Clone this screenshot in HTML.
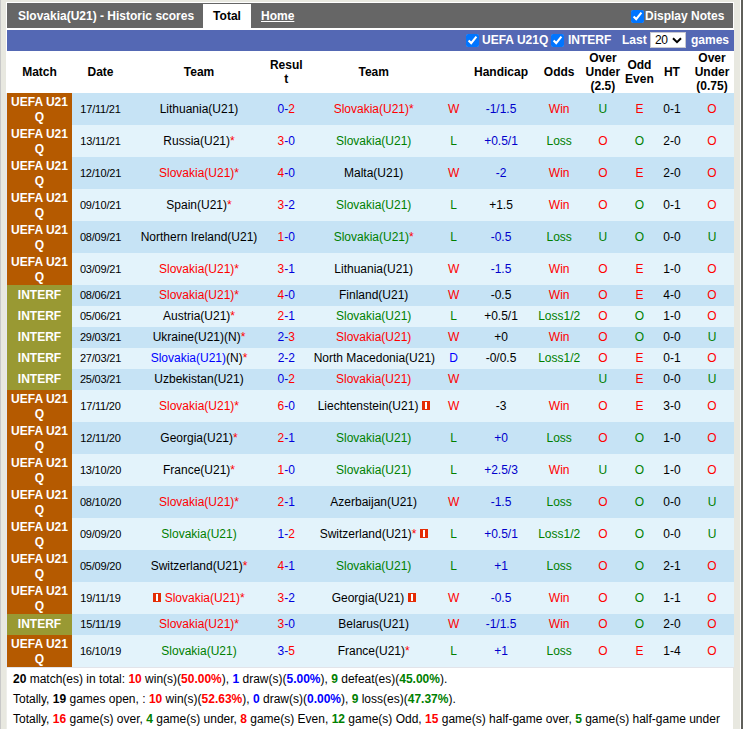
<!DOCTYPE html>
<html><head><meta charset="utf-8"><style>
html,body{margin:0;padding:0}
body{width:743px;height:729px;overflow:hidden;background:#e8e8e0;position:relative;font-family:"Liberation Sans",sans-serif;font-size:12px;color:#000}
.abs{position:absolute}
r{color:#ff0000} g{color:#008000} bl{color:#0000cc} bb{color:#0000ff} rs{color:#0000dd} k{color:#000}
.row{position:absolute;left:7px;width:727px}
.row.d{background:#c6e3f5} .row.l{background:#e3f3fb}
.c{position:absolute;top:0;width:120px;text-align:center;white-space:nowrap;height:100%}
.mc{position:absolute;left:0;top:0;width:65px;height:100%;color:#fff;font-weight:bold;display:flex;align-items:center;justify-content:center;text-align:center;line-height:15px}
.mc.u span{position:relative;top:1px}
.mc.u{background:#b55a00} .mc.i{background:#999933}
.hrow{position:absolute;left:7px;top:51px;width:727px;height:42px;background:#fff;color:#000;font-weight:bold}
.hrow .c{display:flex;align-items:center;justify-content:center;line-height:14px}
.rc{display:inline-block;width:8px;height:9px;background:#e42c05;position:relative;vertical-align:0px}
.rc:after{content:"";position:absolute;left:3px;top:1px;width:2px;height:7px;background:#fff}
.cb{position:absolute;margin:0;width:13px;height:13px;accent-color:#0075ff}
.dt{font-size:11px;letter-spacing:-0.2px}
.foot{position:absolute;left:13px;color:#000;white-space:nowrap}
.foot b{font-weight:bold}
</style></head><body>
<div class="abs" style="left:0;top:0;width:1px;height:729px;background:#c8c8c8"></div>
<div class="abs" style="left:740px;top:0;width:1px;height:729px;background:#fff"></div>
<div class="abs" style="left:741px;top:0;width:2px;height:729px;background:#5f5f5a"></div>
<div class="abs" style="left:6px;top:2px;width:728px;height:666px;background:#fff"></div>
<div class="abs" style="left:6px;top:93px;width:1px;height:575px;background:#e6e8f0"></div>
<div class="abs" style="left:6px;top:668px;width:1px;height:61px;background:#eeeeea"></div>
<div class="abs" style="left:7px;top:668px;width:726px;height:61px;background:#fff"></div>
<div class="abs" style="left:7px;top:3px;width:726px;height:25px;background:#666"></div>
<div class="abs" style="left:18px;top:4px;height:25px;line-height:25px;color:#fff;font-weight:bold">Slovakia(U21) - Historic scores</div>
<div class="abs" style="left:203px;top:4px;width:48px;height:24px;background:#fff;line-height:25px;text-align:center;font-weight:bold;color:#000">Total</div>
<div class="abs" style="left:261px;top:4px;height:25px;line-height:25px;color:#fff;font-weight:bold;text-decoration:underline">Home</div>
<div class="abs" style="left:7px;top:30px;width:727px;height:21px;background:#5468b4"></div>
<input type="checkbox" checked class="cb" style="left:631px;top:10px">
<div class="abs" style="left:645px;top:4px;height:25px;line-height:25px;color:#fff;font-weight:bold">Display Notes</div>
<input type="checkbox" checked class="cb" style="left:466px;top:34px">
<div class="abs" style="left:482px;top:30px;height:21px;line-height:21px;color:#fff;font-weight:bold">UEFA U21Q</div>
<input type="checkbox" checked class="cb" style="left:551px;top:34px">
<div class="abs" style="left:568px;top:30px;height:21px;line-height:21px;color:#fff;font-weight:bold">INTERF</div>
<div class="abs" style="left:622px;top:30px;height:21px;line-height:21px;color:#fff;font-weight:bold">Last</div>
<div class="abs" style="left:650px;top:32px;width:34px;height:14px;border:1px solid #c8c8d0;background:#fff;line-height:14px;color:#000"><span style="position:absolute;left:4px;top:0;letter-spacing:-0.3px">20</span><svg style="position:absolute;left:21px;top:4px" width="10" height="7" viewBox="0 0 10 7"><path d="M1 1.2 L5 5.2 L9 1.2" stroke="#000" stroke-width="2" fill="none"/></svg></div>
<div class="abs" style="left:691px;top:30px;height:21px;line-height:21px;color:#fff;font-weight:bold">games</div>

<div class="hrow"><div class="c h" style="left:-27.5px">Match</div><div class="c h" style="left:33.5px">Date</div><div class="c h" style="left:132.0px">Team</div><div class="c h" style="left:219.3px">Resul<br>t</div><div class="c h" style="left:306.7px">Team</div><div class="c h" style="left:434.0px">Handicap</div><div class="c h" style="left:492.2px">Odds</div><div class="c h" style="left:535.9px">Over<br>Under<br>(2.5)</div><div class="c h" style="left:572.4px">Odd<br>Even</div><div class="c h" style="left:604.9px">HT</div><div class="c h" style="left:645.0px">Over<br>Under<br>(0.75)</div></div>
<div class="row d" style="top:93px;height:32px;line-height:32px"><div class="mc u"><span>UEFA U21<br>Q</span></div><div class="c dt" style="left:33.5px">17/11/21</div><div class="c " style="left:132.0px">Lithuania(U21)</div><div class="c " style="left:219.3px"><rs>0-</rs><r>2</r></div><div class="c " style="left:306.7px"><r>Slovakia(U21)*</r></div><div class="c " style="left:386.6px"><r>W</r></div><div class="c " style="left:434.0px"><bl>-1/1.5</bl></div><div class="c " style="left:492.2px"><r>Win</r></div><div class="c " style="left:535.9px"><g>U</g></div><div class="c " style="left:572.4px"><r>E</r></div><div class="c " style="left:604.9px">0-1</div><div class="c " style="left:645.0px"><r>O</r></div></div>
<div class="row l" style="top:125px;height:32px;line-height:32px"><div class="mc u"><span>UEFA U21<br>Q</span></div><div class="c dt" style="left:33.5px">13/11/21</div><div class="c " style="left:132.0px">Russia(U21)<r>*</r></div><div class="c " style="left:219.3px"><r>3</r><rs>-0</rs></div><div class="c " style="left:306.7px"><g>Slovakia(U21)</g></div><div class="c " style="left:386.6px"><g>L</g></div><div class="c " style="left:434.0px"><bl>+0.5/1</bl></div><div class="c " style="left:492.2px"><g>Loss</g></div><div class="c " style="left:535.9px"><r>O</r></div><div class="c " style="left:572.4px"><g>O</g></div><div class="c " style="left:604.9px">2-0</div><div class="c " style="left:645.0px"><r>O</r></div></div>
<div class="row d" style="top:157px;height:32px;line-height:32px"><div class="mc u"><span>UEFA U21<br>Q</span></div><div class="c dt" style="left:33.5px">12/10/21</div><div class="c " style="left:132.0px"><r>Slovakia(U21)*</r></div><div class="c " style="left:219.3px"><r>4</r><rs>-0</rs></div><div class="c " style="left:306.7px">Malta(U21)</div><div class="c " style="left:386.6px"><r>W</r></div><div class="c " style="left:434.0px"><bl>-2</bl></div><div class="c " style="left:492.2px"><r>Win</r></div><div class="c " style="left:535.9px"><r>O</r></div><div class="c " style="left:572.4px"><r>E</r></div><div class="c " style="left:604.9px">2-0</div><div class="c " style="left:645.0px"><r>O</r></div></div>
<div class="row l" style="top:189px;height:32px;line-height:32px"><div class="mc u"><span>UEFA U21<br>Q</span></div><div class="c dt" style="left:33.5px">09/10/21</div><div class="c " style="left:132.0px">Spain(U21)<r>*</r></div><div class="c " style="left:219.3px"><r>3</r><rs>-2</rs></div><div class="c " style="left:306.7px"><g>Slovakia(U21)</g></div><div class="c " style="left:386.6px"><g>L</g></div><div class="c " style="left:434.0px"><k>+1.5</k></div><div class="c " style="left:492.2px"><r>Win</r></div><div class="c " style="left:535.9px"><r>O</r></div><div class="c " style="left:572.4px"><g>O</g></div><div class="c " style="left:604.9px">0-1</div><div class="c " style="left:645.0px"><r>O</r></div></div>
<div class="row d" style="top:221px;height:32px;line-height:32px"><div class="mc u"><span>UEFA U21<br>Q</span></div><div class="c dt" style="left:33.5px">08/09/21</div><div class="c " style="left:132.0px">Northern Ireland(U21)</div><div class="c " style="left:219.3px"><r>1</r><rs>-0</rs></div><div class="c " style="left:306.7px"><g>Slovakia(U21)</g><r>*</r></div><div class="c " style="left:386.6px"><g>L</g></div><div class="c " style="left:434.0px"><bl>-0.5</bl></div><div class="c " style="left:492.2px"><g>Loss</g></div><div class="c " style="left:535.9px"><g>U</g></div><div class="c " style="left:572.4px"><g>O</g></div><div class="c " style="left:604.9px">0-0</div><div class="c " style="left:645.0px"><g>U</g></div></div>
<div class="row l" style="top:253px;height:32px;line-height:32px"><div class="mc u"><span>UEFA U21<br>Q</span></div><div class="c dt" style="left:33.5px">03/09/21</div><div class="c " style="left:132.0px"><r>Slovakia(U21)*</r></div><div class="c " style="left:219.3px"><r>3</r><rs>-1</rs></div><div class="c " style="left:306.7px">Lithuania(U21)</div><div class="c " style="left:386.6px"><r>W</r></div><div class="c " style="left:434.0px"><bl>-1.5</bl></div><div class="c " style="left:492.2px"><r>Win</r></div><div class="c " style="left:535.9px"><r>O</r></div><div class="c " style="left:572.4px"><r>E</r></div><div class="c " style="left:604.9px">1-0</div><div class="c " style="left:645.0px"><r>O</r></div></div>
<div class="row d" style="top:285px;height:21px;line-height:21px"><div class="mc i"><span>INTERF</span></div><div class="c dt" style="left:33.5px">08/06/21</div><div class="c " style="left:132.0px"><r>Slovakia(U21)*</r></div><div class="c " style="left:219.3px"><r>4</r><rs>-0</rs></div><div class="c " style="left:306.7px">Finland(U21)</div><div class="c " style="left:386.6px"><r>W</r></div><div class="c " style="left:434.0px"><k>-0.5</k></div><div class="c " style="left:492.2px"><r>Win</r></div><div class="c " style="left:535.9px"><r>O</r></div><div class="c " style="left:572.4px"><r>E</r></div><div class="c " style="left:604.9px">4-0</div><div class="c " style="left:645.0px"><r>O</r></div></div>
<div class="row l" style="top:306px;height:21px;line-height:21px"><div class="mc i"><span>INTERF</span></div><div class="c dt" style="left:33.5px">05/06/21</div><div class="c " style="left:132.0px">Austria(U21)<r>*</r></div><div class="c " style="left:219.3px"><r>2</r><rs>-1</rs></div><div class="c " style="left:306.7px"><g>Slovakia(U21)</g></div><div class="c " style="left:386.6px"><g>L</g></div><div class="c " style="left:434.0px"><k>+0.5/1</k></div><div class="c " style="left:492.2px"><g>Loss1/2</g></div><div class="c " style="left:535.9px"><r>O</r></div><div class="c " style="left:572.4px"><g>O</g></div><div class="c " style="left:604.9px">1-0</div><div class="c " style="left:645.0px"><r>O</r></div></div>
<div class="row d" style="top:327px;height:21px;line-height:21px"><div class="mc i"><span>INTERF</span></div><div class="c dt" style="left:33.5px">29/03/21</div><div class="c " style="left:132.0px">Ukraine(U21)(N)<r>*</r></div><div class="c " style="left:219.3px"><rs>2-</rs><r>3</r></div><div class="c " style="left:306.7px"><r>Slovakia(U21)</r></div><div class="c " style="left:386.6px"><r>W</r></div><div class="c " style="left:434.0px"><k>+0</k></div><div class="c " style="left:492.2px"><r>Win</r></div><div class="c " style="left:535.9px"><r>O</r></div><div class="c " style="left:572.4px"><g>O</g></div><div class="c " style="left:604.9px">0-0</div><div class="c " style="left:645.0px"><g>U</g></div></div>
<div class="row l" style="top:348px;height:21px;line-height:21px"><div class="mc i"><span>INTERF</span></div><div class="c dt" style="left:33.5px">27/03/21</div><div class="c " style="left:132.0px"><bb>Slovakia(U21)</bb>(N)<r>*</r></div><div class="c " style="left:219.3px"><rs>2-2</rs></div><div class="c " style="left:306.7px">North Macedonia(U21)</div><div class="c " style="left:386.6px"><bb>D</bb></div><div class="c " style="left:434.0px"><k>-0/0.5</k></div><div class="c " style="left:492.2px"><g>Loss1/2</g></div><div class="c " style="left:535.9px"><r>O</r></div><div class="c " style="left:572.4px"><r>E</r></div><div class="c " style="left:604.9px">0-1</div><div class="c " style="left:645.0px"><r>O</r></div></div>
<div class="row d" style="top:369px;height:21px;line-height:21px"><div class="mc i"><span>INTERF</span></div><div class="c dt" style="left:33.5px">25/03/21</div><div class="c " style="left:132.0px">Uzbekistan(U21)</div><div class="c " style="left:219.3px"><rs>0-</rs><r>2</r></div><div class="c " style="left:306.7px"><r>Slovakia(U21)</r></div><div class="c " style="left:386.6px"><r>W</r></div><div class="c " style="left:434.0px"><k></k></div><div class="c " style="left:535.9px"><g>U</g></div><div class="c " style="left:572.4px"><r>E</r></div><div class="c " style="left:604.9px">0-0</div><div class="c " style="left:645.0px"><g>U</g></div></div>
<div class="row l" style="top:390px;height:32px;line-height:32px"><div class="mc u"><span>UEFA U21<br>Q</span></div><div class="c dt" style="left:33.5px">17/11/20</div><div class="c " style="left:132.0px"><r>Slovakia(U21)*</r></div><div class="c " style="left:219.3px"><r>6</r><rs>-0</rs></div><div class="c " style="left:306.7px">Liechtenstein(U21) <i class=rc></i></div><div class="c " style="left:386.6px"><r>W</r></div><div class="c " style="left:434.0px"><k>-3</k></div><div class="c " style="left:492.2px"><r>Win</r></div><div class="c " style="left:535.9px"><r>O</r></div><div class="c " style="left:572.4px"><r>E</r></div><div class="c " style="left:604.9px">3-0</div><div class="c " style="left:645.0px"><r>O</r></div></div>
<div class="row d" style="top:422px;height:32px;line-height:32px"><div class="mc u"><span>UEFA U21<br>Q</span></div><div class="c dt" style="left:33.5px">12/11/20</div><div class="c " style="left:132.0px">Georgia(U21)<r>*</r></div><div class="c " style="left:219.3px"><r>2</r><rs>-1</rs></div><div class="c " style="left:306.7px"><g>Slovakia(U21)</g></div><div class="c " style="left:386.6px"><g>L</g></div><div class="c " style="left:434.0px"><bl>+0</bl></div><div class="c " style="left:492.2px"><g>Loss</g></div><div class="c " style="left:535.9px"><r>O</r></div><div class="c " style="left:572.4px"><g>O</g></div><div class="c " style="left:604.9px">1-0</div><div class="c " style="left:645.0px"><r>O</r></div></div>
<div class="row l" style="top:454px;height:32px;line-height:32px"><div class="mc u"><span>UEFA U21<br>Q</span></div><div class="c dt" style="left:33.5px">13/10/20</div><div class="c " style="left:132.0px">France(U21)<r>*</r></div><div class="c " style="left:219.3px"><r>1</r><rs>-0</rs></div><div class="c " style="left:306.7px"><g>Slovakia(U21)</g></div><div class="c " style="left:386.6px"><g>L</g></div><div class="c " style="left:434.0px"><bl>+2.5/3</bl></div><div class="c " style="left:492.2px"><r>Win</r></div><div class="c " style="left:535.9px"><g>U</g></div><div class="c " style="left:572.4px"><g>O</g></div><div class="c " style="left:604.9px">1-0</div><div class="c " style="left:645.0px"><r>O</r></div></div>
<div class="row d" style="top:486px;height:32px;line-height:32px"><div class="mc u"><span>UEFA U21<br>Q</span></div><div class="c dt" style="left:33.5px">08/10/20</div><div class="c " style="left:132.0px"><r>Slovakia(U21)*</r></div><div class="c " style="left:219.3px"><r>2</r><rs>-1</rs></div><div class="c " style="left:306.7px">Azerbaijan(U21)</div><div class="c " style="left:386.6px"><r>W</r></div><div class="c " style="left:434.0px"><bl>-1.5</bl></div><div class="c " style="left:492.2px"><g>Loss</g></div><div class="c " style="left:535.9px"><r>O</r></div><div class="c " style="left:572.4px"><g>O</g></div><div class="c " style="left:604.9px">0-0</div><div class="c " style="left:645.0px"><g>U</g></div></div>
<div class="row l" style="top:518px;height:32px;line-height:32px"><div class="mc u"><span>UEFA U21<br>Q</span></div><div class="c dt" style="left:33.5px">09/09/20</div><div class="c " style="left:132.0px"><g>Slovakia(U21)</g></div><div class="c " style="left:219.3px"><rs>1-</rs><r>2</r></div><div class="c " style="left:306.7px">Switzerland(U21)<r>*</r> <i class=rc></i></div><div class="c " style="left:386.6px"><g>L</g></div><div class="c " style="left:434.0px"><bl>+0.5/1</bl></div><div class="c " style="left:492.2px"><g>Loss1/2</g></div><div class="c " style="left:535.9px"><r>O</r></div><div class="c " style="left:572.4px"><g>O</g></div><div class="c " style="left:604.9px">0-0</div><div class="c " style="left:645.0px"><g>U</g></div></div>
<div class="row d" style="top:550px;height:32px;line-height:32px"><div class="mc u"><span>UEFA U21<br>Q</span></div><div class="c dt" style="left:33.5px">05/09/20</div><div class="c " style="left:132.0px">Switzerland(U21)<r>*</r></div><div class="c " style="left:219.3px"><r>4</r><rs>-1</rs></div><div class="c " style="left:306.7px"><g>Slovakia(U21)</g></div><div class="c " style="left:386.6px"><g>L</g></div><div class="c " style="left:434.0px"><bl>+1</bl></div><div class="c " style="left:492.2px"><g>Loss</g></div><div class="c " style="left:535.9px"><r>O</r></div><div class="c " style="left:572.4px"><g>O</g></div><div class="c " style="left:604.9px">2-1</div><div class="c " style="left:645.0px"><r>O</r></div></div>
<div class="row l" style="top:582px;height:32px;line-height:32px"><div class="mc u"><span>UEFA U21<br>Q</span></div><div class="c dt" style="left:33.5px">19/11/19</div><div class="c " style="left:132.0px"><i class=rc></i> <r>Slovakia(U21)*</r></div><div class="c " style="left:219.3px"><r>3</r><rs>-2</rs></div><div class="c " style="left:306.7px">Georgia(U21) <i class=rc></i></div><div class="c " style="left:386.6px"><r>W</r></div><div class="c " style="left:434.0px"><bl>-0.5</bl></div><div class="c " style="left:492.2px"><r>Win</r></div><div class="c " style="left:535.9px"><r>O</r></div><div class="c " style="left:572.4px"><g>O</g></div><div class="c " style="left:604.9px">1-1</div><div class="c " style="left:645.0px"><r>O</r></div></div>
<div class="row d" style="top:614px;height:21px;line-height:21px"><div class="mc i"><span>INTERF</span></div><div class="c dt" style="left:33.5px">15/11/19</div><div class="c " style="left:132.0px"><r>Slovakia(U21)*</r></div><div class="c " style="left:219.3px"><r>3</r><rs>-0</rs></div><div class="c " style="left:306.7px">Belarus(U21)</div><div class="c " style="left:386.6px"><r>W</r></div><div class="c " style="left:434.0px"><bl>-1/1.5</bl></div><div class="c " style="left:492.2px"><r>Win</r></div><div class="c " style="left:535.9px"><r>O</r></div><div class="c " style="left:572.4px"><g>O</g></div><div class="c " style="left:604.9px">2-0</div><div class="c " style="left:645.0px"><r>O</r></div></div>
<div class="row l" style="top:635px;height:32px;line-height:32px"><div class="mc u"><span>UEFA U21<br>Q</span></div><div class="c dt" style="left:33.5px">16/10/19</div><div class="c " style="left:132.0px"><g>Slovakia(U21)</g></div><div class="c " style="left:219.3px"><rs>3-</rs><r>5</r></div><div class="c " style="left:306.7px">France(U21)<r>*</r></div><div class="c " style="left:386.6px"><g>L</g></div><div class="c " style="left:434.0px"><bl>+1</bl></div><div class="c " style="left:492.2px"><g>Loss</g></div><div class="c " style="left:535.9px"><r>O</r></div><div class="c " style="left:572.4px"><r>E</r></div><div class="c " style="left:604.9px">1-4</div><div class="c " style="left:645.0px"><r>O</r></div></div>
<div class="abs" style="left:7px;top:667px;width:727px;height:1px;background:#e2e4ea"></div>
<div class="foot" style="top:672px;line-height:14px"><b>20</b> match(es) in total: <b style="color:#f00">10</b> win(s)(<b style="color:#f00">50.00%</b>), <b style="color:#00f">1</b> draw(s)(<b style="color:#00f">5.00%</b>), <b style="color:#008000">9</b> defeat(es)(<b style="color:#008000">45.00%</b>).</div>
<div class="foot" style="top:692px;line-height:14px">Totally, <b>19</b> games open, : <b style="color:#f00">10</b> win(s)(<b style="color:#f00">52.63%</b>), <b style="color:#00f">0</b> draw(s)(<b style="color:#00f">0.00%</b>), <b style="color:#008000">9</b> loss(es)(<b style="color:#008000">47.37%</b>).</div>
<div class="foot" style="top:712px;line-height:14px">Totally, <b style="color:#f00">16</b> game(s) over, <b style="color:#008000">4</b> game(s) under, <b style="color:#f00">8</b> game(s) Even, <b style="color:#008000">12</b> game(s) Odd, <b style="color:#f00">15</b> game(s) half-game over, <b style="color:#008000">5</b> game(s) half-game under</div>
</body></html>
